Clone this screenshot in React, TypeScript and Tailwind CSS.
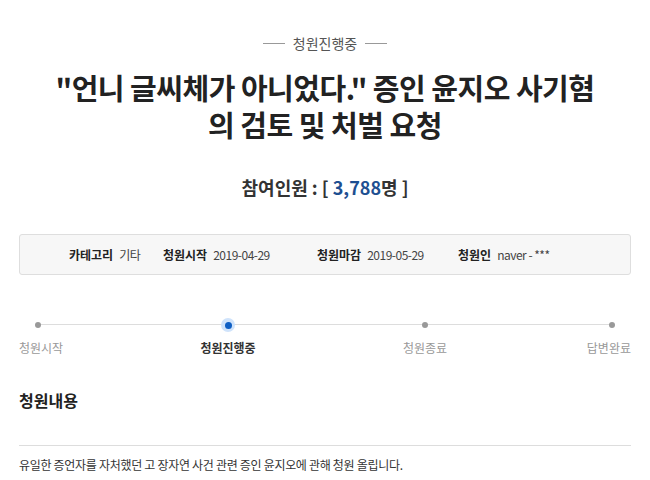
const font = { fontFamily: '"Noto Sans CJK KR", "Noto Sans", sans-serif' }

const info = [
  { label: "카테고리", value: "기타", width: "w-[94px]" },
  { label: "청원시작", value: "2019-04-29", width: "w-[154px]" },
  { label: "청원마감", value: "2019-05-29", width: "w-[141px]" },
  { label: "청원인", value: "naver - ***", width: "" },
]

function Dot({ active }: { active?: boolean }) {
  if (active) {
    return (
      <span className="w-[14px] h-[14px] -my-[4px] rounded-full bg-[#cfe3fb] flex items-center justify-center">
        <span className="w-[7px] h-[7px] rounded-full bg-[#0f5fc4]" />
      </span>
    )
  }
  return <span className="w-[6px] h-[6px] rounded-full bg-[#999]" />
}

export default function App() {
  return (
    <div className="w-[650px] h-[480px] bg-white overflow-hidden px-[19px]" style={font}>
      {/* Status */}
      <div className="pt-[33px] flex items-center justify-center gap-[8px] text-[14px] leading-[20px] text-[#555]">
        <span className="w-[22px] h-px bg-[#999]" />
        <span>청원진행중</span>
        <span className="w-[22px] h-px bg-[#999]" />
      </div>

      {/* Title */}
      <h1 className="mt-[16px] text-center text-[29px] leading-[37px] font-bold text-[#222] tracking-[-0.5px]">
        "언니 글씨체가 아니었다." 증인 윤지오 사기혐
        <br />
        의 검토 및 처벌 요청
      </h1>

      <p className="mt-[32px] text-center text-[18px] leading-[24px] font-bold text-[#333]">
        참여인원 : [ <span className="text-[#1e4f91]">3,788</span>명 ]
      </p>

      {/* Info box */}
      <div className="mt-[35px] h-[41px] border border-[#dedede] rounded-[3px] bg-[#f7f7f7] flex items-center pl-[49px] text-[12px] text-[#444]">
        {info.map((it) => (
          <div key={it.label} className={`flex items-center gap-[6px] ${it.width}`}>
            <span className="font-bold text-[#222]">{it.label}</span>
            <span className="tracking-[-0.5px]">{it.value}</span>
          </div>
        ))}
      </div>

      {/* Progress */}
      <div className="mt-[47px] relative grid grid-cols-[114px_190px_204px_104px] text-[12px] leading-[18px] text-[#999]">
        <div className="absolute left-[19px] right-[19px] top-[2px] h-px bg-[#ddd]" />
        <div className="relative flex flex-col items-start gap-[11px]">
          <span className="ml-[16px] flex"><Dot /></span>
          <span>청원시작</span>
        </div>
        <div className="relative flex flex-col items-center gap-[11px]">
          <span className="flex"><Dot active /></span>
          <span className="font-bold text-[#333]">청원진행중</span>
        </div>
        <div className="relative flex flex-col items-center gap-[11px]">
          <span className="flex"><Dot /></span>
          <span>청원종료</span>
        </div>
        <div className="relative flex flex-col items-end gap-[11px]">
          <span className="mr-[16px] flex"><Dot /></span>
          <span>답변완료</span>
        </div>
      </div>

      {/* Content */}
      <h2 className="mt-[32px] text-[16px] leading-[22px] font-bold text-[#222]">청원내용</h2>
      <div className="mt-[34px] h-px bg-[#ddd]" />
      <p className="mt-[10px] text-[12px] leading-[18px] text-[#333] tracking-[-0.3px]">
        유일한 증언자를 자처했던 고 장자연 사건 관련 증인 윤지오에 관해 청원 올립니다.
      </p>
    </div>
  )
}
